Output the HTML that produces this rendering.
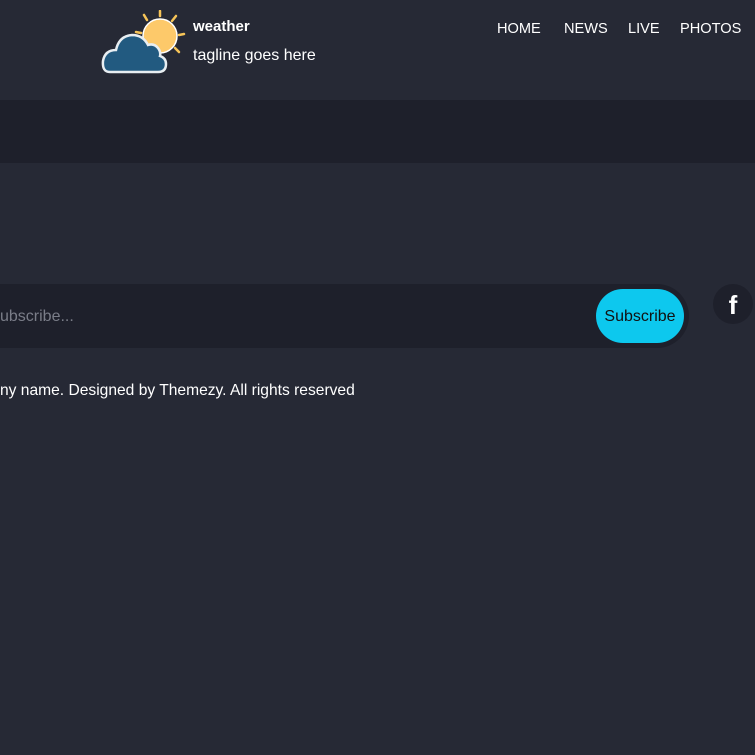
<!DOCTYPE html>
<html><head><style>
body{margin:0;width:755px;height:755px;background:#262935;font-family:"Liberation Sans",sans-serif;color:#fff;position:relative;overflow:hidden}
.a{position:absolute}
.n{position:absolute;top:21px;font-size:14.6px}
</style></head><body>
<svg class="a" style="left:100px;top:10px" width="88" height="66" viewBox="0 0 88 66">
<g stroke="#f6c458" stroke-width="2.5" stroke-linecap="round">
<line x1="60" y1="1" x2="60" y2="6"/><line x1="76" y1="6" x2="72" y2="11"/><line x1="84" y1="24" x2="79" y2="25"/><line x1="79" y1="42" x2="75" y2="38"/><line x1="44" y1="5" x2="47" y2="10"/><line x1="36" y1="22" x2="41" y2="23"/>
</g>
<circle cx="60" cy="26" r="17" fill="#fdc96a" stroke="#fff" stroke-width="1.5"/>
<path d="M10 62 Q2 62 3 51 Q5 40 16 40 Q19 26 32 25 Q43 25 48 35 Q54 33 58 38 Q61 42 60 46 Q66 48 66 54 Q66 62 58 62 Z" fill="#225a80" stroke="#e8eef2" stroke-width="2.5"/>
</svg>
<div class="a" style="left:193px;top:18px;font-weight:bold;font-size:15px">weather</div>
<div class="a" style="left:193px;top:47px;font-size:16px">tagline goes here</div>
<div class="n" style="left:497px">HOME</div>
<div class="n" style="left:564px">NEWS</div>
<div class="n" style="left:628px">LIVE</div>
<div class="n" style="left:680px">PHOTOS</div>
<div class="a" style="left:0;top:100px;width:755px;height:63px;background:#1e202b"></div>
<div class="a" style="left:-40px;top:284px;width:729px;height:64px;background:#1e202b;border-radius:0 32px 32px 0"></div>
<div class="a" style="left:0;top:308px;font-size:16px;color:#7a7d88">ubscribe...</div>
<div class="a" style="left:596px;top:289px;width:88px;height:54px;background:#0dc8ee;border-radius:27px;color:#111;font-size:16px;line-height:56px;text-align:center">Subscribe</div>
<div class="a" style="left:713px;top:284px;width:40px;height:40px;border-radius:50%;background:#1e202b;text-align:center;line-height:42px;font-weight:bold;font-size:26px">f</div>
<div class="a" style="left:0;top:382px;font-size:15.6px">ny name. Designed by Themezy. All rights reserved</div>
</body></html>
